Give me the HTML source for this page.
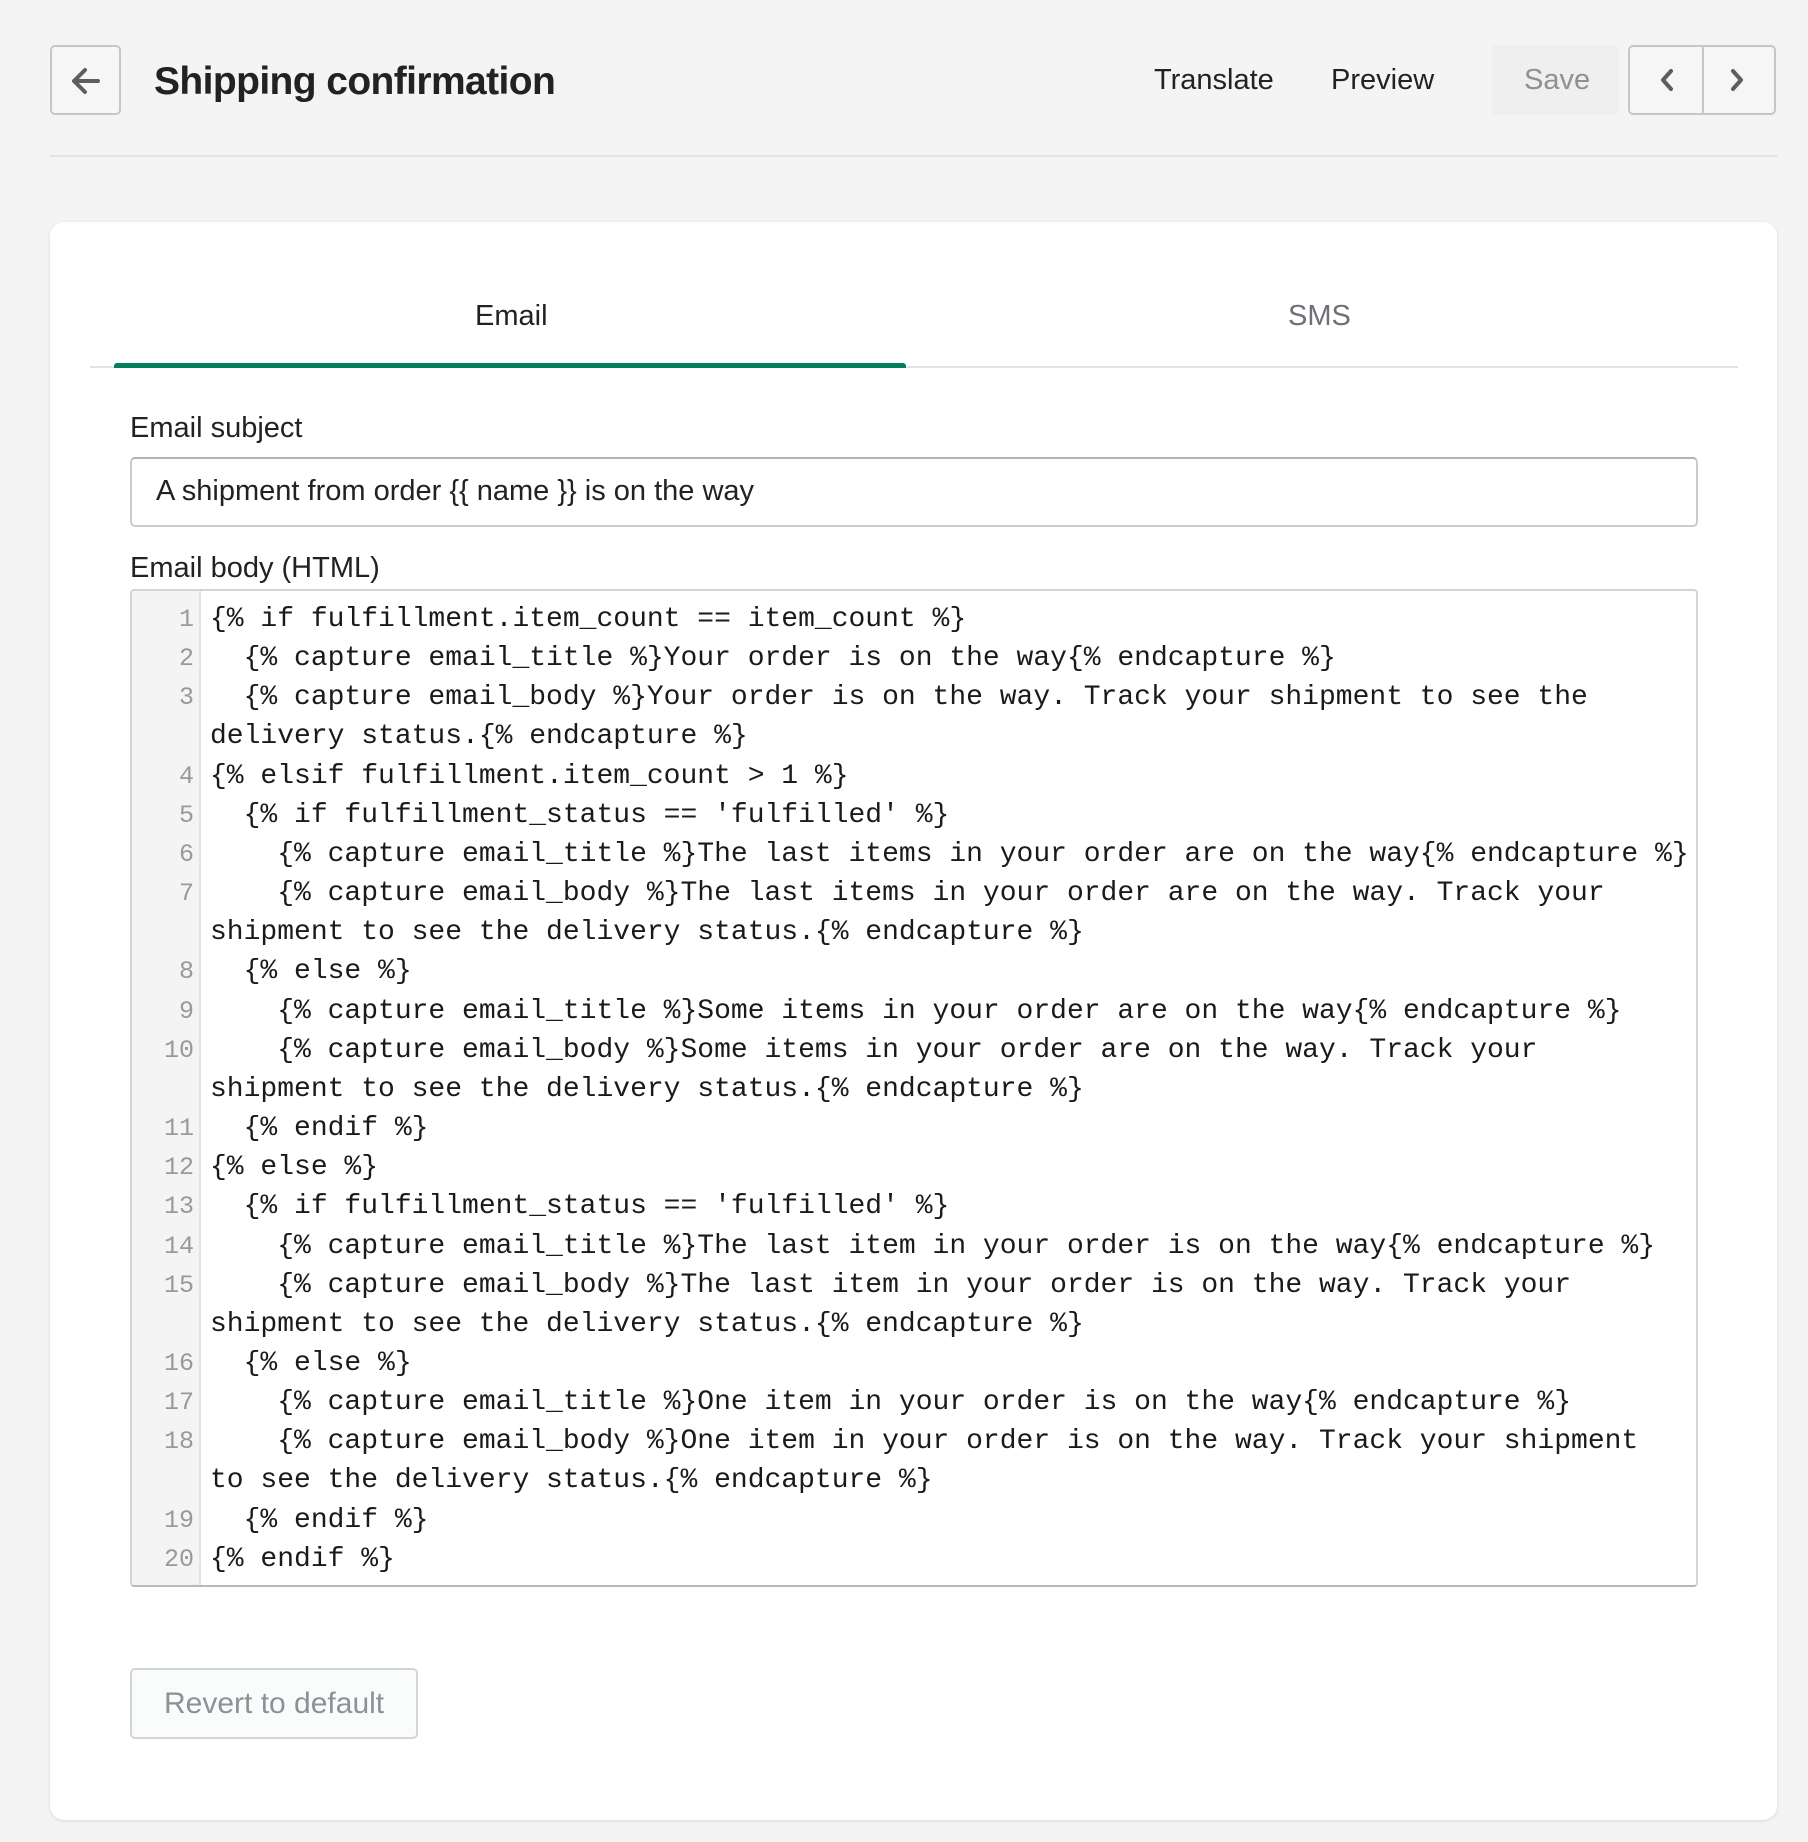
<!DOCTYPE html>
<html><head><meta charset="utf-8"><style>
*{box-sizing:border-box;margin:0;padding:0}
body{width:1808px;height:1842px;background:#f4f4f4;font-family:"Liberation Sans",sans-serif;color:#202223;position:relative;overflow:hidden}
.abs{position:absolute}
.btn{position:absolute;border:2px solid #c4c7ca;border-radius:5px;background:#f6f6f7}
.t{position:absolute;white-space:nowrap}
pre{font-family:"Liberation Mono",monospace;font-size:28px;line-height:39.16px;color:#1a1a1a}
</style></head><body>
<div class="btn" style="left:50px;top:45px;width:71px;height:70px">
<svg width="67" height="66" viewBox="0 0 67 66"><path d="M46 34H22M33 23L22 34l11 11" stroke="#5c5f62" stroke-width="4" fill="none" stroke-linecap="round" stroke-linejoin="round"/></svg></div>
<div class="t" style="left:154px;top:60px;font-size:39px;font-weight:bold;letter-spacing:-0.6px;">Shipping confirmation</div>
<div class="t" style="left:1154px;top:64px;font-size:29px">Translate</div>
<div class="t" style="left:1331px;top:64px;font-size:29px">Preview</div>
<div class="abs" style="left:1492px;top:45px;width:127px;height:70px;background:#efefef;border-radius:5px"></div>
<div class="t" style="left:1524px;top:64px;font-size:29px;color:#8c9196">Save</div>
<div class="btn" style="left:1628px;top:45px;width:148px;height:70px">
<div class="abs" style="left:72px;top:0;width:2px;height:66px;background:#c4c7ca"></div>
<svg class="abs" style="left:0;top:0" width="144" height="66"><path d="M41 24l-8 9 8 9M103 24l8 9-8 9" stroke="#5c5f62" stroke-width="4" fill="none" stroke-linecap="round" stroke-linejoin="round"/></svg></div>
<div class="abs" style="left:50px;top:155px;width:1727px;height:2px;background:#e1e3e5"></div>
<div class="abs" style="left:50px;top:222px;width:1727px;height:1598px;background:#fff;border-radius:14px;box-shadow:0 1px 3px rgba(0,0,0,.12)"></div>
<div class="t" style="left:475px;top:300px;font-size:29px">Email</div>
<div class="t" style="left:1288px;top:300px;font-size:29px;color:#6d7175">SMS</div>
<div class="abs" style="left:90px;top:366px;width:1648px;height:2px;background:#e1e3e5"></div>
<div class="abs" style="left:114px;top:363px;width:792px;height:5px;background:#008060;border-radius:3px 3px 0 0"></div>
<div class="t" style="left:130px;top:412px;font-size:29px">Email subject</div>
<div class="abs" style="left:130px;top:457px;width:1568px;height:70px;border:2px solid #c9cccf;border-top-color:#aeb4b9;border-radius:5px"></div>
<div class="t" style="left:156px;top:475px;font-size:29px">A shipment from order {{ name }} is on the way</div>
<div class="t" style="left:130px;top:552px;font-size:29px">Email body (HTML)</div>
<div class="abs" style="left:130px;top:589px;width:1568px;height:998px;border:2px solid #d2d5d8;border-bottom-color:#b5babf;border-radius:4px;overflow:hidden">
<div class="abs" style="left:0;top:0;width:69px;height:1000px;background:#f4f4f4;border-right:2px solid #e3e3e3"></div>
<pre class="abs" style="left:0;top:9px;width:62px;text-align:right;color:#999;font-size:25px">1
2
3

4
5
6
7

8
9
10

11
12
13
14
15

16
17
18

19
20</pre>
<pre class="abs" style="left:78px;top:9px">{% if fulfillment.item_count == item_count %}
  {% capture email_title %}Your order is on the way{% endcapture %}
  {% capture email_body %}Your order is on the way. Track your shipment to see the
delivery status.{% endcapture %}
{% elsif fulfillment.item_count > 1 %}
  {% if fulfillment_status == 'fulfilled' %}
    {% capture email_title %}The last items in your order are on the way{% endcapture %}
    {% capture email_body %}The last items in your order are on the way. Track your
shipment to see the delivery status.{% endcapture %}
  {% else %}
    {% capture email_title %}Some items in your order are on the way{% endcapture %}
    {% capture email_body %}Some items in your order are on the way. Track your
shipment to see the delivery status.{% endcapture %}
  {% endif %}
{% else %}
  {% if fulfillment_status == 'fulfilled' %}
    {% capture email_title %}The last item in your order is on the way{% endcapture %}
    {% capture email_body %}The last item in your order is on the way. Track your
shipment to see the delivery status.{% endcapture %}
  {% else %}
    {% capture email_title %}One item in your order is on the way{% endcapture %}
    {% capture email_body %}One item in your order is on the way. Track your shipment
to see the delivery status.{% endcapture %}
  {% endif %}
{% endif %}</pre>
</div>
<div class="btn" style="left:130px;top:1668px;width:288px;height:71px;background:#fafbfb;border-color:#d2d5d8"></div>
<div class="t" style="left:164px;top:1687px;font-size:30px;color:#8c9196">Revert to default</div>
</body></html>
